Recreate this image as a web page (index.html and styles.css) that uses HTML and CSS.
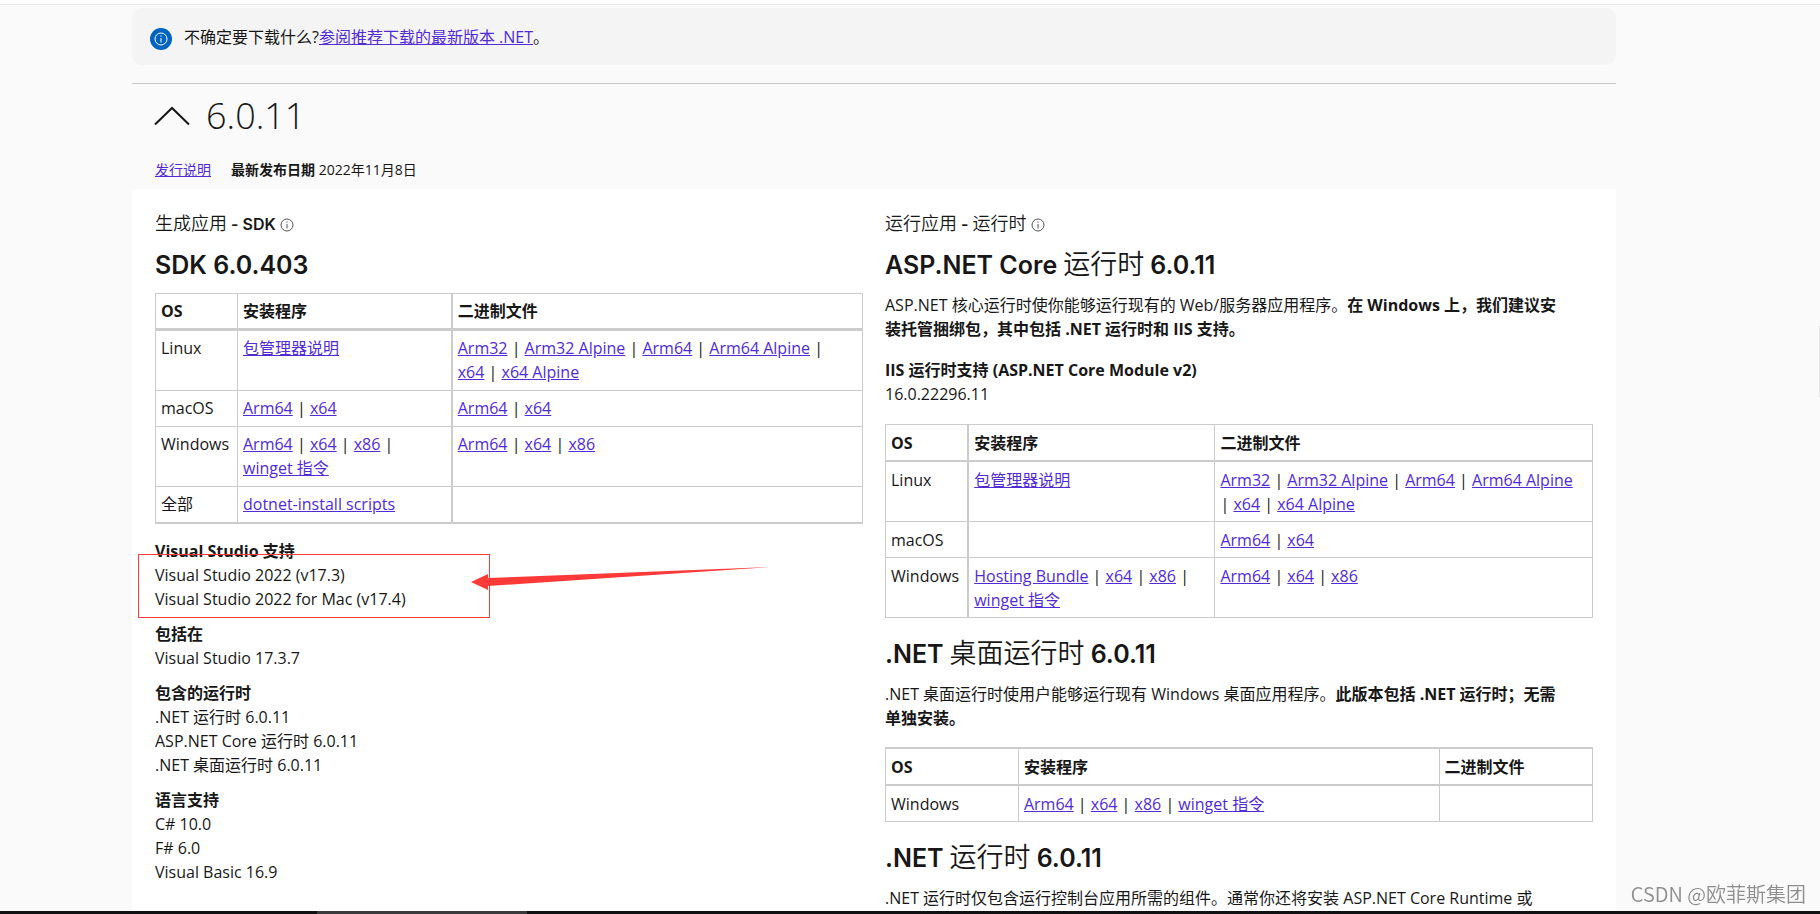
FILE: index.html
```html
<!DOCTYPE html>
<html lang="zh-CN">
<head>
<meta charset="utf-8">
<title>下载 .NET 6.0</title>
<link rel="stylesheet" href="styles.css">
</head>
<body>
<svg class="sprite" aria-hidden="true">
  <symbol id="info" viewBox="0 0 14 14">
    <circle cx="7" cy="7" r="6" fill="none" stroke="currentColor"/>
    <path d="M7 6v4.500M7 3.500v1.200" fill="none" stroke="currentColor"/>
  </symbol>
</svg>
<div class="page">
  <header class="topline"></header>
  <main class="content">
    <aside class="callout">
      <span class="callout-icon"><svg class="icon"><use href="#info"/></svg></span>
      <p>不确定要下载什么?<a href="#latest">参阅推荐下载的最新版本 .NET</a>。</p>
    </aside>
    <section class="release">
      <h2><button class="toggle" type="button" aria-expanded="true">
        <svg class="chevron" viewBox="0 0 36 20"><path d="M1 18.500 18 2l17 16.500" fill="none" stroke="currentColor" stroke-width="2"/></svg>
        <span>6.0.11</span>
      </button></h2>
      <div class="meta"><a href="#notes">发行说明</a><span><b>最新发布日期</b> 2022年11月8日</span></div>
      <div class="panel">
        <div class="column">
          <h3>生成应用 <b>- SDK</b> <svg class="icon"><use href="#info"/></svg></h3>
          <h4><b>SDK 6.0.403</b></h4>
          <table class="sdk">
            <colgroup><col class="c1"><col class="c2"><col></colgroup>
            <thead><tr><th>OS</th><th>安装程序</th><th>二进制文件</th></tr></thead>
            <tbody>
              <tr><td>Linux</td><td><a href="#a">包管理器说明</a></td><td><a href="#a">Arm32</a> | <a href="#a">Arm32 Alpine</a> | <a href="#a">Arm64</a> | <a href="#a">Arm64 Alpine</a> |<br><a href="#a">x64</a> | <a href="#a">x64 Alpine</a></td></tr>
              <tr><td>macOS</td><td><a href="#a">Arm64</a> | <a href="#a">x64</a></td><td><a href="#a">Arm64</a> | <a href="#a">x64</a></td></tr>
              <tr><td>Windows</td><td><a href="#a">Arm64</a> | <a href="#a">x64</a> | <a href="#a">x86</a> |<br><a href="#a">winget 指令</a></td><td><a href="#a">Arm64</a> | <a href="#a">x64</a> | <a href="#a">x86</a></td></tr>
              <tr><td>全部</td><td><a href="#a">dotnet-install scripts</a></td><td></td></tr>
            </tbody>
          </table>
          <dl class="facts">
            <div class="marked">
              <dt>Visual Studio 支持</dt><dd>Visual Studio 2022 (v17.3)</dd><dd>Visual Studio 2022 for Mac (v17.4)</dd>
              <svg class="mark" width="640" height="66" viewBox="0 0 640 66" aria-hidden="true">
                <rect x="0.500" y="0.500" width="351" height="63" fill="none" stroke="#fe3a38"/>
                <path d="M333 28 350 20v4L632 13 350 32v4z" fill="#fe3a38"/>
              </svg>
            </div>
            <div><dt>包括在</dt><dd>Visual Studio 17.3.7</dd></div>
            <div><dt>包含的运行时</dt><dd>.NET 运行时 6.0.11</dd><dd>ASP.NET Core 运行时 6.0.11</dd><dd>.NET 桌面运行时 6.0.11</dd></div>
            <div><dt>语言支持</dt><dd>C# 10.0</dd><dd>F# 6.0</dd><dd>Visual Basic 16.9</dd></div>
          </dl>
        </div>
        <div class="column">
          <h3>运行应用 <b>-</b> 运行时 <svg class="icon"><use href="#info"/></svg></h3>
          <h4><b>ASP.NET Core</b> 运行时 <b>6.0.11</b></h4>
          <p class="text">ASP.NET 核心运行时使你能够运行现有的 Web/服务器应用程序。<b>在 Windows 上，我们建议安<br>装托管捆绑包，其中包括 .NET 运行时和 IIS 支持。</b></p>
          <dl class="iis"><dt>IIS 运行时支持 (ASP.NET Core Module v2)</dt><dd>16.0.22296.11</dd></dl>
          <table class="asp">
            <colgroup><col class="c1"><col class="c2"><col></colgroup>
            <thead><tr><th>OS</th><th>安装程序</th><th>二进制文件</th></tr></thead>
            <tbody>
              <tr><td>Linux</td><td><a href="#a">包管理器说明</a></td><td><a href="#a">Arm32</a> | <a href="#a">Arm32 Alpine</a> | <a href="#a">Arm64</a> | <a href="#a">Arm64 Alpine</a><br>| <a href="#a">x64</a> | <a href="#a">x64 Alpine</a></td></tr>
              <tr><td>macOS</td><td></td><td><a href="#a">Arm64</a> | <a href="#a">x64</a></td></tr>
              <tr><td>Windows</td><td><a href="#a">Hosting Bundle</a> | <a href="#a">x64</a> | <a href="#a">x86</a> |<br><a href="#a">winget 指令</a></td><td><a href="#a">Arm64</a> | <a href="#a">x64</a> | <a href="#a">x86</a></td></tr>
            </tbody>
          </table>
          <h4><b>.NET</b> 桌面运行时 <b>6.0.11</b></h4>
          <p class="text">.NET 桌面运行时使用户能够运行现有 Windows 桌面应用程序。<b>此版本包括 .NET 运行时；无需<br>单独安装。</b></p>
          <table class="desktop">
            <colgroup><col class="c1"><col class="c2"><col></colgroup>
            <thead><tr><th>OS</th><th>安装程序</th><th>二进制文件</th></tr></thead>
            <tbody>
              <tr><td>Windows</td><td><a href="#a">Arm64</a> | <a href="#a">x64</a> | <a href="#a">x86</a> | <a href="#a">winget 指令</a></td><td></td></tr>
            </tbody>
          </table>
          <h4><b>.NET</b> 运行时 <b>6.0.11</b></h4>
          <p class="text">.NET 运行时仅包含运行控制台应用所需的组件。通常你还将安装 ASP.NET Core Runtime 或</p>
        </div>
      </div>
    </section>
  </main>
</div>
<div class="side-tab"></div>
<div class="watermark">CSDN @欧菲斯集团</div>
<div class="bottom-bar"><span class="thumb"></span></div>
</body>
</html>
```
FILE: styles.css
```css
* { box-sizing: border-box; }
body {
  margin: 0;
  background: #fafafa;
  color: #171717;
  font: 16px/24px "Open Sans", "Noto Sans CJK SC", sans-serif;
}
.page { height: 100vh; overflow: hidden; }
h2, h3, h4, p, dl, dd { margin: 0; font-weight: 400; }
a { color: #512bd4; text-decoration: underline; }
.sprite { position: absolute; width: 0; height: 0; }
.icon { width: 14px; height: 14px; }

.topline { height: 5px; background: #fff; border-bottom: 1px solid #e6e6e6; }
.content { padding: 3px 204px 0 132px; }
.callout {
  display: flex;
  align-items: center;
  gap: 12px;
  height: 57px;
  padding: 0 18px;
  background: #f4f4f4;
  border-radius: 10px;
}
.callout-icon {
  display: flex;
  align-items: center;
  justify-content: center;
  width: 22px;
  height: 22px;
  margin-top: 4px;
  border-radius: 50%;
  background: #0064bf;
  color: #fff;
}

.release { margin-top: 18px; border-top: 1px solid #c8c8c8; }
.toggle {
  display: flex;
  align-items: center;
  gap: 16px;
  margin: 7px 0 0 22px;
  padding: 0;
  border: 0;
  background: none;
  color: inherit;
  font: 300 36px/50px "Open Sans", sans-serif;
}
.chevron { width: 36px; height: 20px; }
.meta {
  display: flex;
  gap: 20px;
  padding: 17px 23px 7px;
  font-size: 14px;
}
.panel {
  display: grid;
  grid-template-columns: minmax(0, 1fr) minmax(0, 1fr);
  gap: 22px;
  padding: 21px 23px 40px;
  background: #fff;
}
h3 { font-size: 18px; line-height: 24px; }
h3, h4 { font-family: "Noto Sans CJK SC", sans-serif; font-weight: 350; }
h3 b, h4 b { font-family: Inter, sans-serif; font-weight: 600; }
h3 b { font-size: 16px; }
h4 b { font-size: 25px; }
h3 .icon { color: #555; vertical-align: -2px; }
h4 { margin: 9px 0 10px; font-size: 27px; line-height: 36px; }
.text { margin-bottom: 17px; }
b, dt, th { font-weight: 700; }

table { width: 100%; border-collapse: collapse; table-layout: fixed; }
th, td {
  padding: 6px 5px 5px;
  border: 1px solid #ccc;
  text-align: left;
  vertical-align: top;
  white-space: nowrap;
}
th { border-bottom-width: 2px; }
.sdk { border-bottom: 2px solid #ccc; }
.sdk th { padding: 5px; border-bottom-width: 3px; }
.sdk td { padding: 5px 5px 6px; }
.sdk .c1 { width: 11.600%; }
.sdk .c2 { width: 30.300%; }
.asp .c1 { width: 11.700%; }
.asp .c2 { width: 34.900%; }
.desktop .c1 { width: 18.800%; }
.desktop .c2 { width: 59.500%; }
.sdk td:nth-child(2), .sdk th:nth-child(2) { border-right-width: 2px; }
.asp td:first-child, .asp th:first-child { border-right-width: 2px; }
.desktop th { border-top-width: 2px; }
table + h4 { margin-top: 16px; }

.facts { display: grid; gap: 11px; margin-top: 15px; }
.marked { position: relative; }
.mark { position: absolute; left: -17px; top: 15px; }
.iis { margin-bottom: 18px; }

.side-tab {
  position: fixed;
  right: 0;
  top: 326px;
  width: 1px;
  height: 71px;
  background: #e4e4e4;
}
.watermark {
  position: fixed;
  right: 14px;
  bottom: 8px;
  color: #8e8e8e;
  font: 350 20px/24px "Noto Sans CJK SC", sans-serif;
}
.bottom-bar {
  position: fixed;
  left: 0;
  right: 0;
  bottom: 0;
  display: flex;
  height: 3px;
  padding-left: 317px;
  background: #101012;
}
.thumb { width: 210px; background: #3a3a3c; }
```
